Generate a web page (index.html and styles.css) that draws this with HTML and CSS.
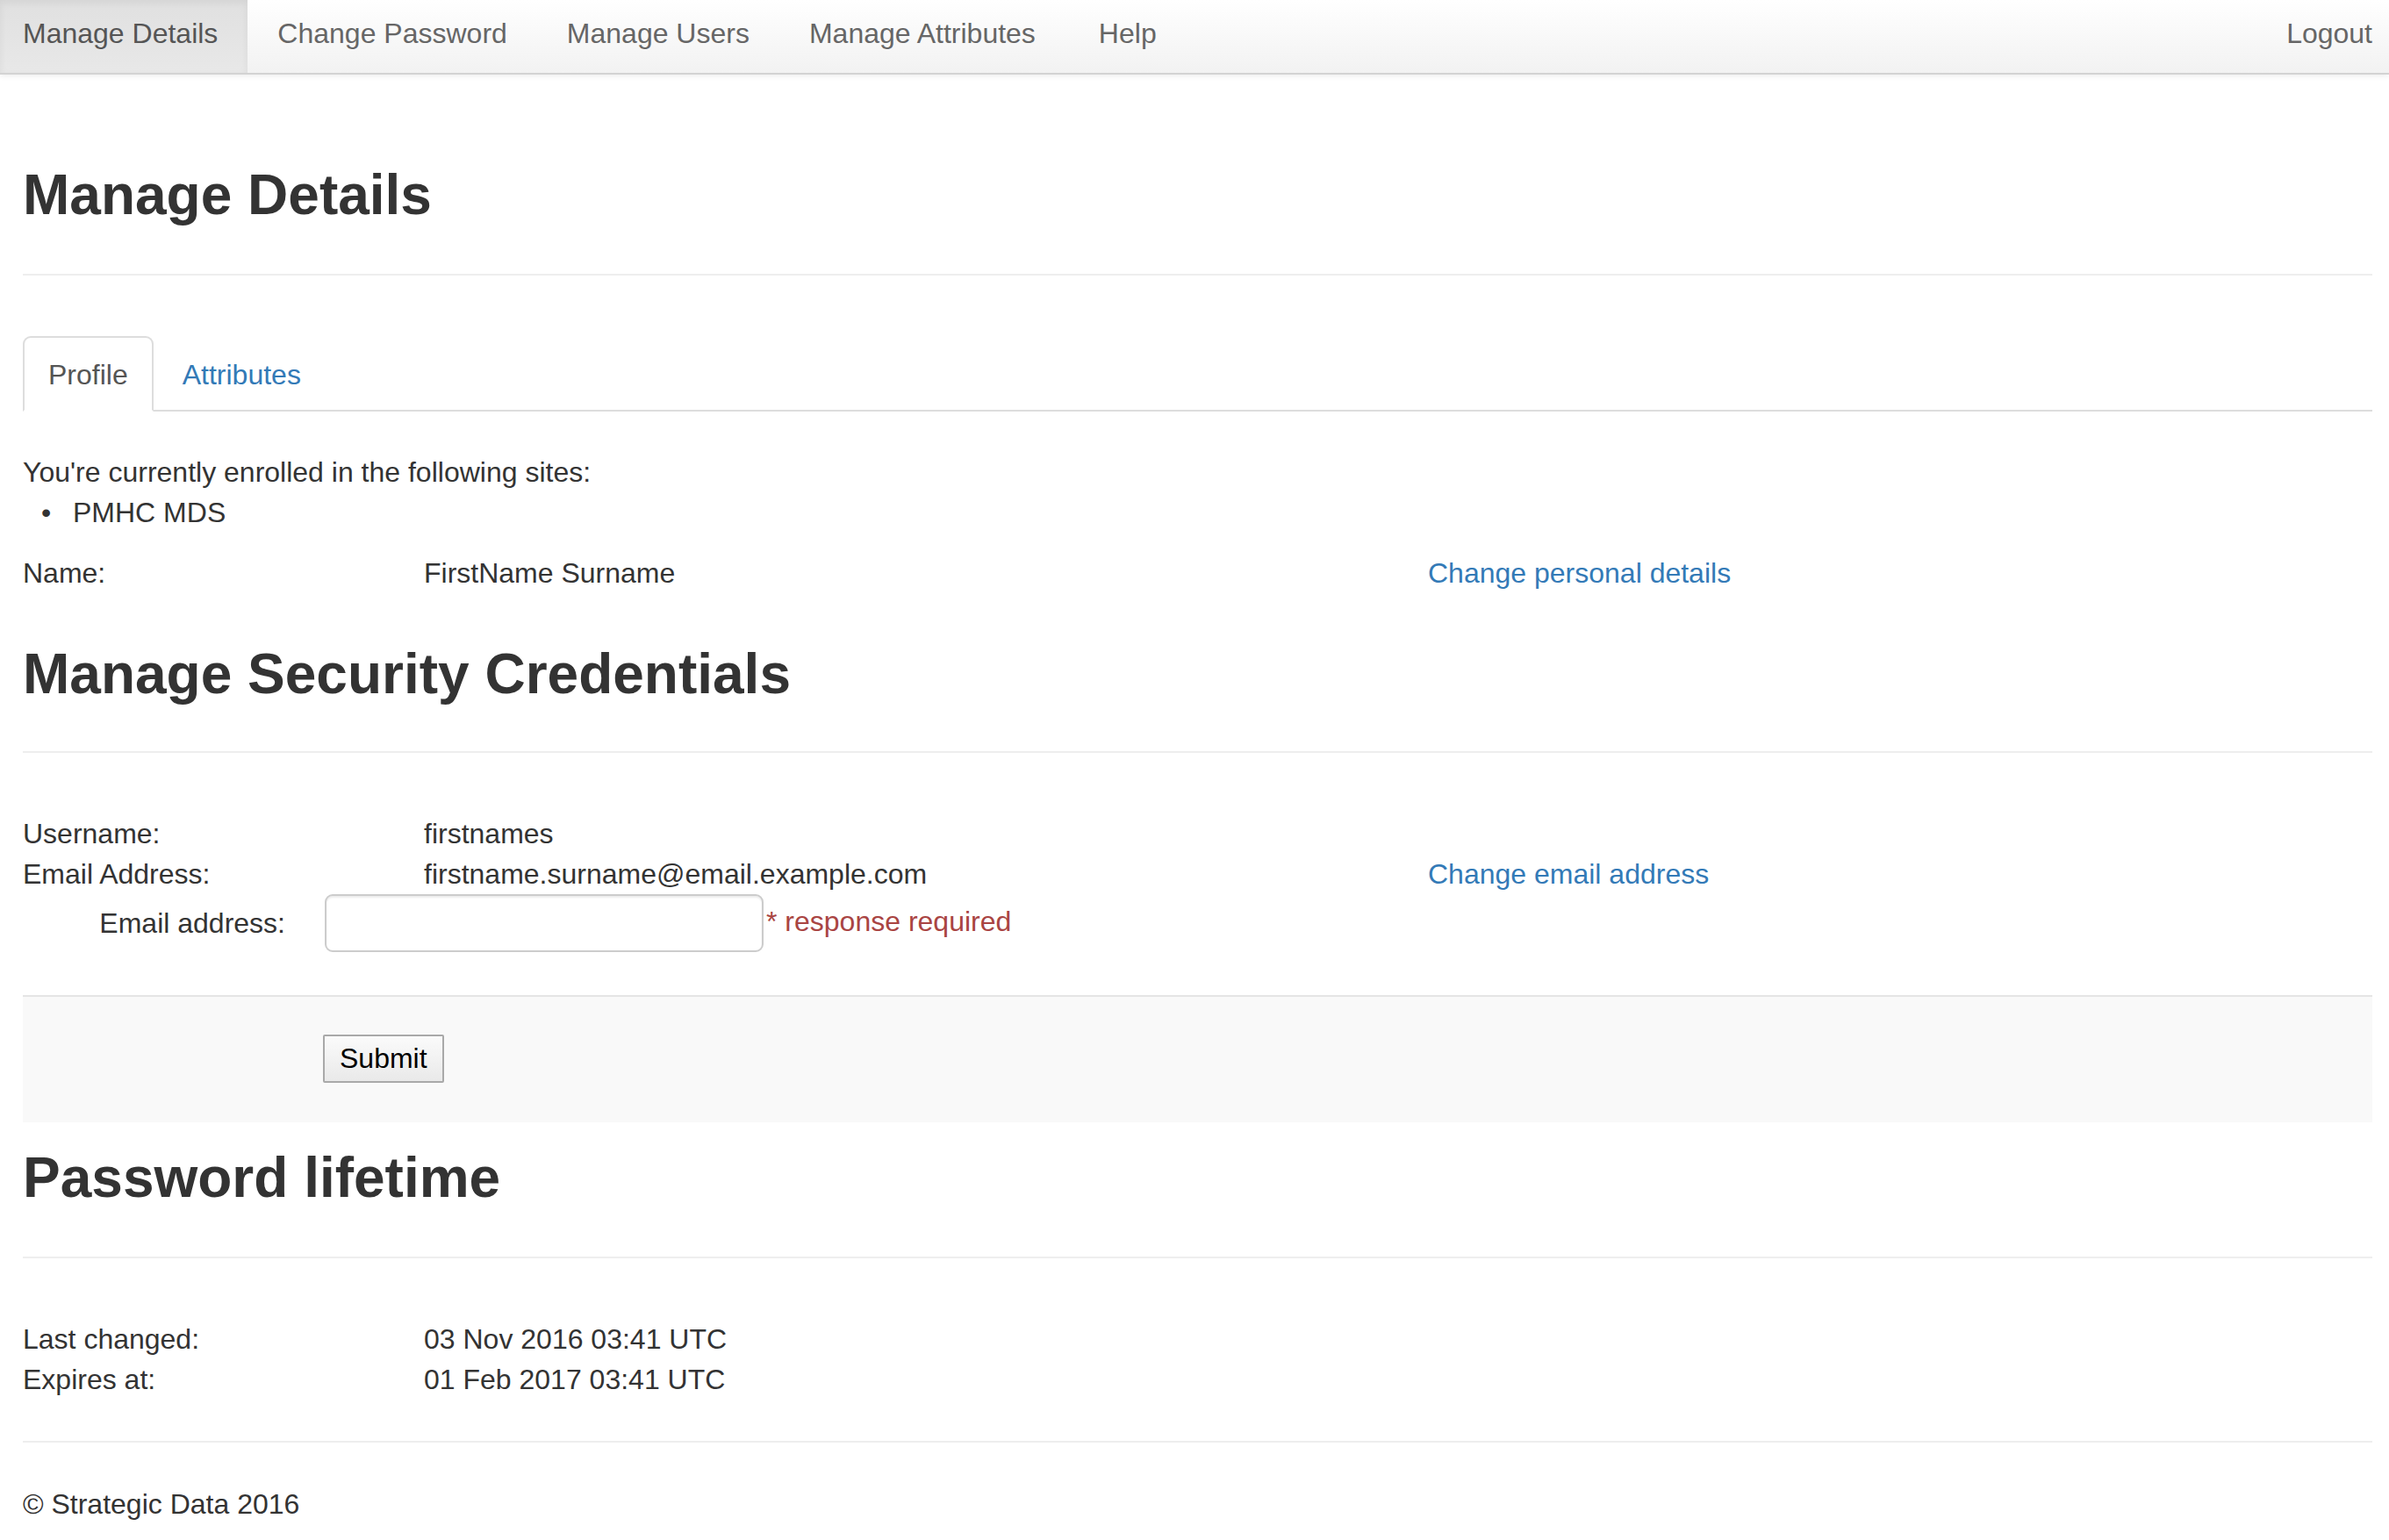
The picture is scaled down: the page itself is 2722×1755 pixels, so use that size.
FILE: index.html
```html
<!DOCTYPE html>
<html lang="en">
<head>
<meta charset="utf-8">
<title>Manage Details</title>
<link rel="stylesheet" href="styles.css">
</head>
<body>
<nav class="navbar">
  <ul class="nav-main">
    <li class="nav-item active"><a href="#">Manage Details</a></li>
    <li class="nav-item"><a href="#">Change Password</a></li>
    <li class="nav-item"><a href="#">Manage Users</a></li>
    <li class="nav-item"><a href="#">Manage Attributes</a></li>
    <li class="nav-item"><a href="#">Help</a></li>
  </ul>
  <ul class="nav-right">
    <li class="nav-item"><a href="#">Logout</a></li>
  </ul>
</nav>

<main class="page">
  <h1 class="title title-first">Manage Details</h1>
  <hr class="rule">

  <ul class="tabs">
    <li class="tab active"><a href="#">Profile</a></li>
    <li class="tab"><a href="#">Attributes</a></li>
  </ul>

  <div class="tab-content">
    <p class="plain">You're currently enrolled in the following sites:</p>
    <ul class="sites">
      <li>PMHC MDS</li>
    </ul>
    <div class="row">
      <div class="cell-label">Name:</div>
      <div class="cell-value">FirstName Surname</div>
      <div class="cell-link"><a href="#">Change personal details</a></div>
    </div>
  </div>

  <h1 class="title">Manage Security Credentials</h1>
  <hr class="rule">

  <div class="row">
    <div class="cell-label">Username:</div>
    <div class="cell-value">firstnames</div>
    <div class="cell-link"></div>
  </div>
  <div class="row">
    <div class="cell-label">Email Address:</div>
    <div class="cell-value">firstname.surname@email.example.com</div>
    <div class="cell-link"><a href="#">Change email address</a></div>
  </div>

  <form class="email-form">
    <div class="form-row">
      <label class="form-label" for="email">Email address:</label>
      <input class="form-input" id="email" type="text">
      <span class="form-help">* response required</span>
    </div>
    <div class="form-actions">
      <button class="btn-submit" type="button">Submit</button>
    </div>
  </form>

  <h1 class="title title-after-form">Password lifetime</h1>
  <hr class="rule">

  <div class="row">
    <div class="cell-label">Last changed:</div>
    <div class="cell-value">03 Nov 2016 03:41 UTC</div>
    <div class="cell-link"></div>
  </div>
  <div class="row">
    <div class="cell-label">Expires at:</div>
    <div class="cell-value">01 Feb 2017 03:41 UTC</div>
    <div class="cell-link"></div>
  </div>

  <hr class="rule footer-rule">
  <footer class="footer">© Strategic Data 2016</footer>
</main>
</body>
</html>
```

FILE: styles.css
```css
* {
  box-sizing: border-box;
}

html, body {
  margin: 0;
  padding: 0;
  background: #ffffff;
}

body {
  font-family: "Liberation Sans", Arial, Helvetica, sans-serif;
  font-size: 32px;
  line-height: 46px;
  color: #333333;
}

a {
  color: #337ab7;
  text-decoration: none;
}

/* ---------- navbar ---------- */
.navbar {
  display: flex;
  align-items: stretch;
  height: 85px;
  background: linear-gradient(to bottom, #ffffff 0%, #f2f2f2 100%);
  border-bottom: 2px solid #d3d3d3;
  box-shadow: 0 2px 6px rgba(0, 0, 0, 0.07);
}

.nav-main,
.nav-right {
  list-style: none;
  margin: 0;
  padding: 0;
  display: flex;
}

.nav-right {
  margin-left: auto;
}

.nav-item a {
  display: block;
  height: 83px;
  line-height: 77px;
  padding: 0 34px 6px 34px;
  color: #666666;
}

.nav-main .nav-item:first-child a {
  padding-left: 26px;
}

.nav-main .nav-item:nth-child(4) a {
  padding-right: 38px;
}

.nav-right .nav-item a {
  padding-right: 19px;
}

.nav-item.active a {
  color: #555555;
  background: linear-gradient(to bottom, #e0e0e0 0%, #e8e8e8 100%);
  box-shadow: inset 0 3px 9px rgba(0, 0, 0, 0.06);
}

/* ---------- page ---------- */
.page {
  padding: 0 19px 18px 26px;
}

.title {
  font-size: 64px;
  line-height: 72px;
  font-weight: bold;
  color: #333333;
  margin: 56px 0 52px 0;
}

.title-first {
  margin-top: 101px;
  margin-bottom: 54px;
}

.title-after-form {
  margin-top: 27px;
  margin-bottom: 54px;
}

.rule {
  border: 0;
  border-top: 2px solid #eeeeee;
  height: 0;
  margin: 0 0 69px 0;
}

.footer-rule {
  margin: 47px 0 47px 0;
}

/* ---------- tabs ---------- */
.tabs {
  list-style: none;
  margin: 0;
  padding: 0;
  display: flex;
  border-bottom: 2px solid #dddddd;
}

.tab {
  margin-bottom: -2px;
  margin-right: 4px;
}

.tab a {
  display: block;
  padding: 19px 27px 17px 27px;
  border: 2px solid transparent;
  border-radius: 9px 9px 0 0;
  line-height: 46px;
}

.tab.active a {
  color: #555555;
  background: #ffffff;
  border-color: #dddddd #dddddd transparent #dddddd;
}

.tab-content {
  padding-top: 46px;
}

.plain {
  margin: 0;
}

.sites {
  list-style: none;
  margin: 0 0 23px 0;
  padding-left: 21px;
}

.sites li {
  display: flex;
}

.sites li::before {
  content: "•";
  display: inline-block;
  width: 36px;
  flex: none;
}

/* ---------- rows ---------- */
.row {
  display: grid;
  grid-template-columns: 457px 1144px 1fr;
  min-height: 46px;
}

/* ---------- form ---------- */
.email-form {
  margin: 0;
}

.form-row {
  display: flex;
  align-items: center;
  height: 66px;
}

.form-label {
  width: 344px;
  padding-right: 45px;
  text-align: right;
}

.form-input {
  width: 500px;
  height: 66px;
  border: 2px solid #cccccc;
  border-radius: 9px;
  box-shadow: inset 0 2px 2px rgba(0, 0, 0, 0.075);
  font-family: inherit;
  font-size: 32px;
  padding: 0 20px;
  background: #ffffff;
}

.form-help {
  color: #a94442;
  margin-left: 3px;
  margin-top: -4px;
}

.form-actions {
  margin-top: 49px;
  border-top: 2px solid #e5e5e5;
  background: #f9f9f9;
  padding: 43px 0 45px 342px;
}

.btn-submit {
  display: block;
  height: 55px;
  padding: 0 17px;
  font-family: inherit;
  font-size: 32px;
  line-height: 51px;
  color: #000000;
  background: linear-gradient(to bottom, #fbfbfb 0%, #e9e9e9 100%);
  border: 2px solid #a9a9a9;
  border-radius: 2px;
}

/* ---------- footer ---------- */
.footer {
  line-height: 46px;
}
```
